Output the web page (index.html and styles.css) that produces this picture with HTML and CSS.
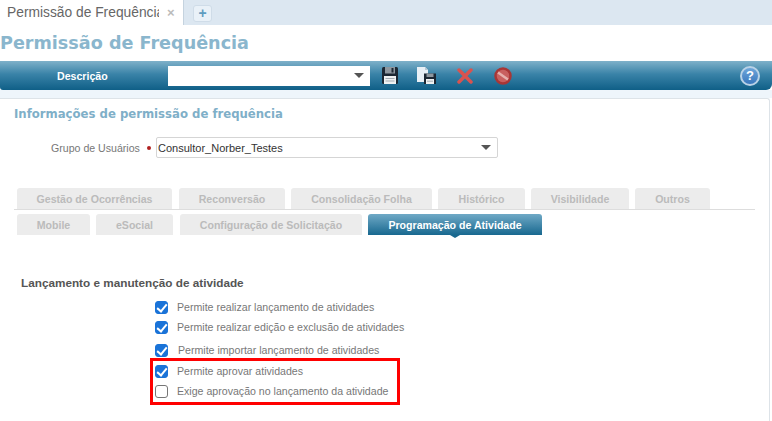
FILE: index.html
```html
<!DOCTYPE html>
<html lang="pt-BR">
<head>
    <meta charset="UTF-8">
    <meta name="viewport" content="width=device-width, initial-scale=1.0">
    <title>Permissão de Frequência</title>
    <link rel="stylesheet" href="styles.css">
</head>
<body>
    <div class="tabstrip">
        <div class="doc-tab">
            <span class="doc-tab-name">Permissão de Frequência</span>
            <span class="doc-tab-close">×</span>
        </div>
        <div class="doc-tab-add">+</div>
    </div>

    <h1 class="page-title">Permissão de Frequência</h1>

    <div class="toolbar">
        <span class="toolbar-label">Descrição</span>
        <div class="toolbar-select"><span class="arrow"></span></div>
        <div class="toolbar-icons">
            <svg class="icon" width="16" height="17" viewBox="0 0 16 17">
                <path d="M0 1.500Q0 0 1.500 0H14.500Q16 0 16 1.500V15.500Q16 17 14.500 17H1.500Q0 17 0 15.500z" fill="#1b2733"/>
                <path d="M3 0h10v6.500H3z" fill="#8d979f"/>
                <path d="M9.500 1h2v4.500h-2z" fill="#1b2733"/>
                <path d="M2 9h12v8H2z" fill="#eef1f2"/>
                <path d="M3.500 11.500h9M3.500 14h9" stroke="#a3abb1"/>
            </svg>
            <svg class="icon icon-saveas" width="19" height="17" viewBox="0 0 19 17">
                <path d="M0 0h8l3 3v12H0z" fill="#e8f0f6"/>
                <path d="M8 0v3h3z" fill="#b9c9d6"/>
                <path d="M7 6.500h12V17H7z" fill="#1b2733"/>
                <path d="M9.500 6.500h7v3.500h-7z" fill="#8d979f"/>
                <path d="M9 12h8v5H9z" fill="#eef1f2"/>
                <path d="M10 14.200h6" stroke="#a3abb1"/>
            </svg>
            <svg class="icon icon-delete" width="16" height="16" viewBox="0 0 16 16">
                <path d="M2 2l12 12M14 2L2 14" stroke="#d9534f" stroke-width="3.500" stroke-linecap="round"/>
            </svg>
            <svg class="icon icon-block" width="18" height="18" viewBox="0 0 18 18">
                <circle cx="9" cy="9" r="7.500" fill="#c8605f" stroke="#a83636" stroke-width="2.500"/>
                <path d="M4 5.500l10 7" stroke="#e6b0ac" stroke-width="2.500"/>
            </svg>
        </div>
        <div class="help">?</div>
    </div>
    <div class="toolbar-band"></div>

    <div class="panel">
        <h2 class="panel-title">Informações de permissão de frequência</h2>

        <div class="group-row">
            <label class="group-label">Grupo de Usuários</label>
            <span class="required"></span>
            <div class="group-select">
                <span>Consultor_Norber_Testes</span>
                <span class="arrow"></span>
            </div>
        </div>

        <div class="tabs tabs-top">
            <div class="tab tab-gestao">Gestão de Ocorrências</div>
            <div class="tab tab-recon">Reconversão</div>
            <div class="tab tab-consol">Consolidação Folha</div>
            <div class="tab tab-hist">Histórico</div>
            <div class="tab tab-visib">Visibilidade</div>
            <div class="tab tab-outros">Outros</div>
        </div>
        <div class="tabs tabs-bottom">
            <div class="tab tab-mobile">Mobile</div>
            <div class="tab tab-esocial">eSocial</div>
            <div class="tab tab-config">Configuração de Solicitação</div>
            <div class="tab tab-active">Programação de Atividade</div>
        </div>

        <h3 class="section-title">Lançamento e manutenção de atividade</h3>

        <ul class="checks">
            <li class="check-row"><span class="box on"></span>Permite realizar lançamento de atividades</li>
            <li class="check-row"><span class="box on"></span>Permite realizar edição e exclusão de atividades</li>
            <li class="check-row row-import"><span class="box on"></span>Permite importar lançamento de atividades</li>
        </ul>
        <ul class="checks-marked">
            <li class="check-row"><span class="box on"></span>Permite aprovar atividades</li>
            <li class="check-row"><span class="box"></span>Exige aprovação no lançamento da atividade</li>
        </ul>
    </div>
</body>
</html>
```

FILE: styles.css
```css
html, body {
    height: 421px;
    overflow: hidden;
}
body {
    margin: 0;
    background: #fff;
    font-family: "Liberation Sans", Arial, sans-serif;
    color: #666;
}
.tabstrip {
    display: flex;
    align-items: center;
    height: 25px;
    background: #dce7f1;
}
.doc-tab {
    display: flex;
    align-items: center;
    width: 184px;
    height: 25px;
    background: #fff;
    border-right: 1px solid #c5d3df;
    padding-left: 7px;
    box-sizing: border-box;
    font-size: 13.800px;
    color: #666;
}
.doc-tab-name {
    width: 152px;
    overflow: hidden;
    white-space: nowrap;
}
.doc-tab-close {
    margin-left: 8px;
    color: #bbb;
    font-weight: bold;
    font-size: 13px;
}
.doc-tab-add {
    width: 19px;
    height: 17px;
    margin-left: 9px;
    margin-top: 1px;
    background: #e9f1f8;
    border: 1px solid #cfdce8;
    border-radius: 3px;
    box-sizing: border-box;
    color: #5f9cc0;
    font-weight: bold;
    font-size: 14px;
    line-height: 15px;
    text-align: center;
}
.page-title {
    margin: 8px 0 0;
    height: 28px;
    font-family: "DejaVu Sans", sans-serif;
    font-size: 17.600px;
    line-height: 21px;
    font-weight: bold;
    color: #8ab6cd;
    white-space: nowrap;
}
.toolbar {
    display: flex;
    align-items: center;
    height: 29px;
    background: linear-gradient(#7fb1c9, #3a83a8 45%, #0f5f87);
    border-radius: 0 0 6px 3px;
}
.toolbar-band {
    height: 8px;
    background: #eef5fb;
}
.toolbar-label {
    width: 168px;
    box-sizing: border-box;
    padding-left: 57px;
    font-size: 10.600px;
    font-weight: bold;
    color: #fff;
}
.toolbar-select {
    display: flex;
    align-items: center;
    justify-content: flex-end;
    width: 202px;
    height: 20px;
    padding-right: 6px;
    box-sizing: border-box;
    background: #fff;
}
.arrow {
    width: 0;
    height: 0;
    border-left: 5px solid transparent;
    border-right: 5px solid transparent;
    border-top: 5px solid #555;
}
.toolbar-icons {
    display: flex;
    align-items: center;
    margin-left: 12px;
}
.icon-saveas {
    margin-left: 19px;
}
.icon-delete {
    margin-left: 21px;
}
.icon-block {
    margin-left: 21px;
}
.help {
    width: 20px;
    height: 20px;
    margin-left: auto;
    margin-right: 12px;
    border: 2px solid #b9d2e6;
    border-radius: 50%;
    box-sizing: border-box;
    background: linear-gradient(#6ea6da, #3a78bd);
    color: #fff;
    font-size: 13px;
    font-weight: bold;
    line-height: 16px;
    text-align: center;
}
.panel {
    width: 770px;
    height: 323px;
    padding-top: 7px;
    background: #fff;
    border-top: 1px solid #dde3e8;
    border-right: 1px solid #dde3e8;
    border-radius: 0 3px 0 0;
    box-sizing: border-box;
}
.panel-title {
    margin: 0 0 0 14px;
    font-family: "DejaVu Sans", sans-serif;
    font-size: 11.700px;
    line-height: 16px;
    font-weight: bold;
    color: #7fafc8;
}
.group-row {
    display: flex;
    align-items: center;
    margin-top: 15px;
    padding-left: 51px;
    font-size: 10.600px;
}
.group-label {
    width: 96px;
    color: #777;
}
.required {
    width: 4px;
    height: 4px;
    border-radius: 50%;
    background: #b02020;
}
.group-select {
    display: flex;
    align-items: center;
    justify-content: space-between;
    width: 342px;
    height: 21px;
    margin-left: 5px;
    padding: 0 6px 0 1px;
    box-sizing: border-box;
    border: 1px solid #d5d5d5;
    border-radius: 2px;
    font-size: 11px;
    color: #333;
}
.tabs {
    display: flex;
    gap: 6px;
    margin-left: 14px;
    width: 741px;
    padding-left: 3px;
    box-sizing: border-box;
}
.tabs-top {
    margin-top: 30px;
    height: 22px;
    border-bottom: 1px solid #ddd;
}
.tabs-bottom {
    margin-top: 4px;
    height: 21px;
}
.tab {
    display: flex;
    align-items: center;
    justify-content: center;
    height: 21px;
    background: #ececec;
    border-radius: 3px 3px 0 0;
    font-size: 10.600px;
    font-weight: bold;
    color: #bbb;
    white-space: nowrap;
    box-sizing: border-box;
}
.tab-gestao { width: 155px; margin-right: 1px; }
.tab-recon { width: 106px; }
.tab-consol { width: 141px; }
.tab-hist { width: 87px; }
.tab-visib { width: 98px; }
.tab-outros { width: 75px; }
.tab-mobile { width: 73px; }
.tab-esocial { width: 77px; margin-right: 1px; }
.tab-config { width: 182px; }
.tab-active {
    width: 174px;
    color: #fff;
    background: linear-gradient(#6fa9c6, #18688f);
    position: relative;
}
.tab-active::after {
    content: "";
    position: absolute;
    left: 82px;
    bottom: -3px;
    border-left: 5px solid transparent;
    border-right: 5px solid transparent;
    border-top: 3px solid #18688f;
}
.section-title {
    margin: 41px 0 0 21px;
    font-size: 11.750px;
    line-height: 14px;
    font-weight: bold;
    color: #555;
}
.checks {
    list-style: none;
    margin: 7px 0 0;
    padding: 0 0 0 155px;
}
.check-row {
    display: flex;
    align-items: center;
    height: 20px;
    font-size: 10.600px;
    color: #777;
}
.row-import {
    margin-top: 3px;
}
.row-import .box {
    margin-right: 10px;
}
.checks-marked {
    list-style: none;
    width: 250px;
    height: 47px;
    margin: -2px 0 0 150px;
    padding: 0 0 0 2px;
    box-sizing: border-box;
    border: 3px solid #f00;
}
.box {
    width: 13px;
    height: 13px;
    margin-right: 9px;
    border: 1px solid #767676;
    border-radius: 3px;
    box-sizing: border-box;
    background: #fff;
    position: relative;
}
.box.on {
    background: #1a73d8;
    border-color: #1a73d8;
}
.box.on::after {
    content: "";
    position: absolute;
    left: 3px;
    top: 0;
    width: 4px;
    height: 8px;
    border: solid #fff;
    border-width: 0 2px 2px 0;
    transform: rotate(40deg);
}
```
